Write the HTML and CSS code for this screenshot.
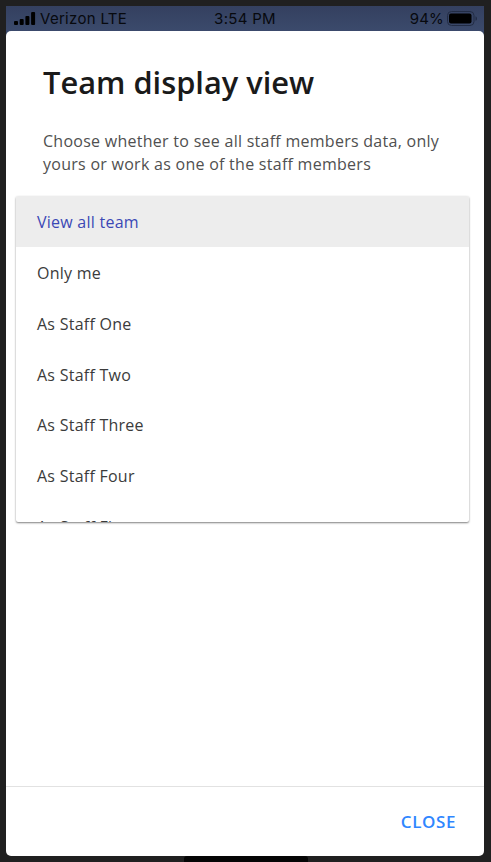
FILE: index.html
```html
<!DOCTYPE html>
<html lang="en">
    <head>
        <meta charset="UTF-8" />
        <meta name="viewport" content="width=device-width, initial-scale=1.0" />
        <title>Team display view</title>
        <link rel="stylesheet" href="styles.css">
    </head>
    <body>
        <div class="screen">
            <header class="status-bar">
                <div class="carrier">
                    <svg class="signal" width="22" height="14" viewBox="0 0 22 14">
                        <rect x="0" y="9" width="4" height="4" rx="1" />
                        <rect x="5.7" y="7" width="4" height="6" rx="1" />
                        <rect x="11.4" y="4" width="4" height="9" rx="1" />
                        <rect x="17.1" y="0" width="4" height="13" rx="1" />
                    </svg>
                    <span class="carrier-name">Verizon LTE</span>
                </div>
                <span class="time">3:54 PM</span>
                <div class="battery">
                    <span class="percent">94%</span>
                    <svg width="31" height="15" viewBox="0 0 31 15">
                        <rect x="0.5" y="0.5" width="26.5" height="14" rx="4" fill="none" stroke="#222c44" />
                        <rect x="2" y="2.5" width="22.5" height="10" rx="2" />
                        <path d="M28.5 5.2c2 .8 2 3.8 0 4.6z" fill="#222c44" />
                    </svg>
                </div>
            </header>

            <div class="dialog">
                <h1>Team display view</h1>
                <p class="description">
                    Choose whether to see all staff members data, only<br />
                    yours or work as one of the staff members
                </p>

                <ul class="options">
                    <li class="selected">View all team</li>
                    <li>Only me</li>
                    <li>As Staff One</li>
                    <li>As Staff Two</li>
                    <li>As Staff Three</li>
                    <li>As Staff Four</li>
                    <li>As Staff Five</li>
                </ul>

                <footer class="actions">
                    <button class="close-button">CLOSE</button>
                </footer>
            </div>
        </div>
        <div class="home-notch"></div>
    </body>
</html>
```

FILE: styles.css
```css
* {
    box-sizing: border-box;
}
body {
    margin: 0;
    padding: 6px 7px 0 6px;
    height: 862px;
    overflow: hidden;
    background-color: #202020;
    font-family: 'Open Sans', 'Noto Sans', sans-serif;
    display: flex;
    flex-direction: column;
}
.screen {
    height: 850px;
    display: flex;
    flex-direction: column;
    background: linear-gradient(#34405f, #3b4a6c 25px, #202020 40px);
}
.status-bar {
    height: 25px;
    padding: 0 6px 0 8px;
    display: grid;
    grid-template-columns: 1fr auto 1fr;
    align-items: center;
    font-family: Inter, 'Liberation Sans', sans-serif;
    font-size: 15px;
    line-height: 25px;
    letter-spacing: 0.3px;
    color: #07090e;
}
.time {
    margin-right: 2px;
}
.carrier,
.battery {
    display: flex;
    align-items: center;
    gap: 4px;
}
.battery {
    justify-content: flex-end;
    gap: 3px;
}
.percent {
    letter-spacing: 0.2px;
}
.dialog {
    flex: 1;
    display: flex;
    flex-direction: column;
    background-color: #fff;
    border-radius: 5px;
}
h1 {
    margin: 30px 0 0 37px;
    font-size: 30.8px;
    line-height: 42px;
    font-weight: 600;
    color: #1a1a1a;
}
.description {
    margin: 27px 0 0 37px;
    font-size: 16px;
    line-height: 23px;
    letter-spacing: 0.27px;
    color: #505050;
    white-space: nowrap;
}
.options {
    list-style: none;
    margin: 20px 15px 0 10px;
    padding: 0;
    height: 326px;
    overflow: hidden;
    border-radius: 2px;
    box-shadow: 0 1px 2px rgba(0, 0, 0, 0.5);
}
.options li {
    height: 50.85px;
    padding-left: 21px;
    font-size: 16px;
    line-height: 52px;
    letter-spacing: 0.25px;
    color: #3b3b3b;
}
.options .selected {
    background-color: #ededed;
    color: #3b48b5;
}
.actions {
    margin-top: auto;
    height: 70px;
    padding-right: 28px;
    border-top: 1px solid #e2e2e2;
    display: flex;
    justify-content: flex-end;
    align-items: center;
}
.close-button {
    padding: 0;
    border: none;
    background: none;
    font-family: inherit;
    font-size: 17px;
    font-weight: 600;
    letter-spacing: 0.6px;
    color: #2f86ff;
    cursor: pointer;
}
.home-notch {
    width: 124px;
    height: 6px;
    margin-left: 178px;
    background-color: #050505;
    border-radius: 3px 3px 0 0;
}
```
